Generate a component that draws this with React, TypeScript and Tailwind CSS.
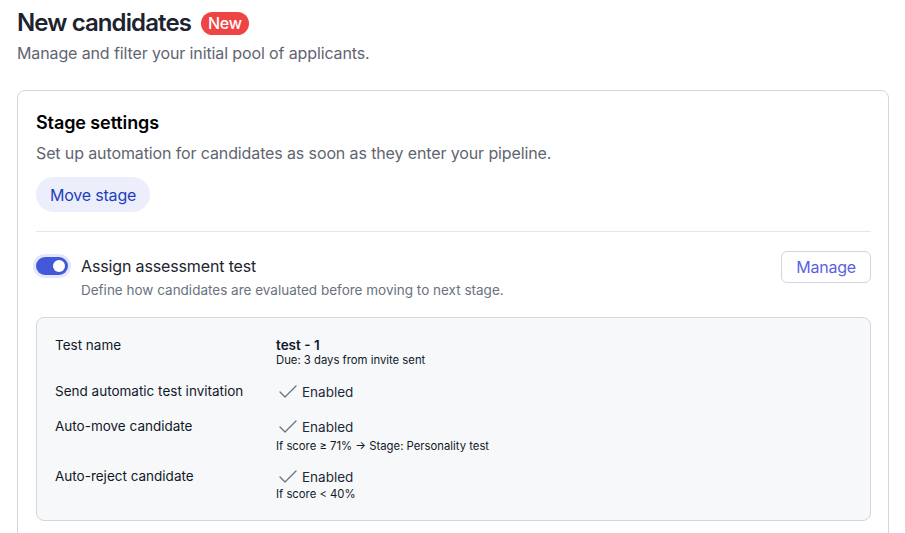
import React from 'react';
import { Check } from 'lucide-react';

const font = { fontFamily: 'Inter, "Noto Sans", sans-serif' };

function EnabledValue({ note, noteClass }: { note?: string; noteClass?: string }) {
  return (
    <div className="mt-[-1px]">
      <div className="flex items-center gap-[2px] h-6">
        <Check className="w-6 h-6 text-gray-500 shrink-0" strokeWidth={1.3} />
        <span className="text-[13.5px] leading-5 text-gray-800">Enabled</span>
      </div>
      {note && <p className={`text-[11.3px] leading-[13px] text-gray-900 ${noteClass ?? ''}`}>{note}</p>}
    </div>
  );
}

export default function App() {
  return (
    <div className="bg-white min-h-screen px-[17px] pt-[7px] text-gray-900" style={font}>
      {/* Header */}
      <div className="flex items-center gap-[10px]">
        <h1 className="text-2xl leading-8 font-semibold text-[#1c2330] tracking-[-0.9px]">New candidates</h1>
        <span className="bg-[#ef4444] text-white text-base leading-[23px] font-medium px-[7px] rounded-full tracking-[-0.2px]">
          New
        </span>
      </div>
      <p className="mt-[2px] text-base leading-6 text-[#5f6570] tracking-[-0.12px]">
        Manage and filter your initial pool of applicants.
      </p>

      {/* Stage settings card */}
      <div className="mt-[25px] mr-[-1px] border border-[#d3d6de] rounded-lg p-[18px] pr-[17px] pb-[40px]">
        <h2 className="text-lg leading-7 font-semibold text-black tracking-[-0.1px]">Stage settings</h2>
        <p className="mt-[4px] text-base leading-6 text-[#5f6570] tracking-[-0.12px]">
          Set up automation for candidates as soon as they enter your pipeline.
        </p>
        <button className="mt-[12px] h-[35px] px-[14px] rounded-full bg-[#eceefb] text-[#1e3fbd] text-base tracking-[-0.2px]">
          Move stage
        </button>

        <div className="mt-[19px] border-t border-[#e4e6eb]" />

        {/* Assessment */}
        <div className="mt-[19px] flex items-start justify-between">
          <div className="flex items-start">
            <div className="mt-[6px] w-[32px] h-[18px] rounded-full bg-[#4258d9] ring-[3px] ring-[#e3e7fc] flex items-center justify-end pr-[3px]">
              <div className="w-[12px] h-[12px] rounded-full bg-white" />
            </div>
            <div className="ml-[13px] pt-[3px]">
              <p className="text-base leading-6 text-[#1f2430] tracking-[-0.14px]">Assign assessment test</p>
              <p className="mt-[2px] text-[13.5px] leading-5 text-[#6b7280]">
                Define how candidates are evaluated before moving to next stage.
              </p>
            </div>
          </div>
          <button className="h-[32px] px-[14px] border border-[#d3d6de] rounded-md text-base text-[#5a62e0] tracking-[-0.2px]">
            Manage
          </button>
        </div>

        <div className="mt-[17px] border border-[#d3d6de] rounded-lg bg-[#f7f8fa] px-[18px] pt-[17px] pb-[19px]">
          <div className="flex">
            <div className="w-[221px] text-[13.5px] leading-5 text-gray-900">Test name</div>
            <div>
              <p className="text-[13.5px] leading-[18px] font-semibold text-gray-900 mt-[1px]">test - 1</p>
              <p className="text-[11.3px] leading-[13px] text-gray-900">Due: 3 days from invite sent</p>
            </div>
          </div>
          <div className="flex mt-[14px]">
            <div className="w-[221px] text-[13.5px] leading-5 text-gray-900">Send automatic test invitation</div>
            <EnabledValue />
          </div>
          <div className="flex mt-[12px]">
            <div className="w-[221px] text-[13.5px] leading-5 text-gray-900">Auto-move candidate</div>
            <EnabledValue note="If score ≥ 71% → Stage: Personality test" noteClass="mt-[1px]" />
          </div>
          <div className="flex mt-[13px]">
            <div className="w-[221px] text-[13.5px] leading-5 text-gray-900">Auto-reject candidate</div>
            <EnabledValue note="If score < 40%" noteClass="mt-[-1px]" />
          </div>
        </div>
      </div>
    </div>
  );
}
